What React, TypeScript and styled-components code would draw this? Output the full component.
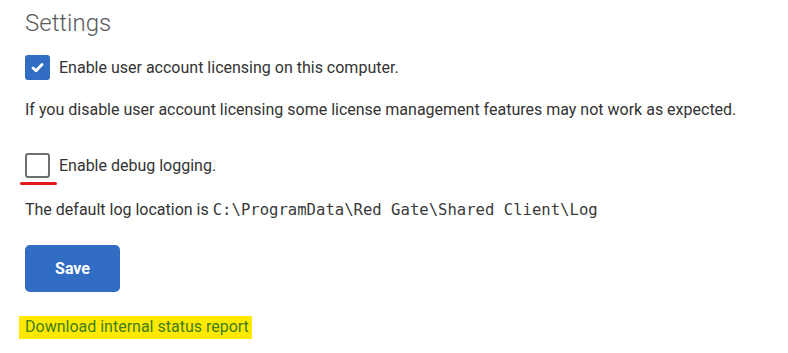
import React from "react";
import styled, {createGlobalStyle} from "styled-components";

const GlobalStyle = createGlobalStyle`
  body {
    margin: 0;
    background: #ffffff;
    font-family: Roboto, "Liberation Sans", sans-serif;
    color: #333333;
  }
`

const Page = styled.div`
  padding: 8px 25px 0 25px;
  display: flex;
  flex-direction: column;
  align-items: flex-start;
`

const Title = styled.h1`
  margin: 0;
  font-weight: 300;
  font-size: 24px;
  line-height: 30px;
  color: #5a5a5a;
`

const OptionRow = styled.label<{ $top: number }>`
  display: flex;
  align-items: center;
  gap: 9px;
  margin-top: ${p => p.$top}px;
  font-size: 16px;
  color: #333333;
  cursor: pointer;
`

const BoxWrap = styled.span`
  position: relative;
  display: inline-flex;
`

const Box = styled.span<{ $checked: boolean }>`
  box-sizing: border-box;
  width: 25px;
  height: 25px;
  border-radius: 3px;
  display: inline-flex;
  align-items: center;
  justify-content: center;
  background: ${p => p.$checked ? "#316dc2" : "#ffffff"};
  border: 2px solid ${p => p.$checked ? "#316dc2" : "#6e6e6e"};
`

const Underline = styled.span`
  position: absolute;
  left: -5px;
  top: 29px;
  width: 37px;
  height: 3px;
  border-radius: 2px;
  background: #e3191b;
`

const Text = styled.p<{ $top: number }>`
  margin: ${p => p.$top}px 0 0 0;
  font-size: 16px;
  line-height: 20px;
  color: #333333;
`

const Mono = styled.span`
  font-family: "DejaVu Sans Mono", "Liberation Mono", monospace;
  font-size: 15.6px;
  color: #3a3a3a;
`

const SaveButton = styled.button`
  margin-top: 25px;
  width: 95px;
  height: 47px;
  border: none;
  border-radius: 5px;
  background: #316dc2;
  color: #ffffff;
  font-family: Roboto, "Liberation Sans", sans-serif;
  font-weight: 700;
  font-size: 16px;
  cursor: pointer;
`

const ReportLink = styled.a`
  margin: 24px 0 0 -6px;
  padding: 1px 3px 2px 6px;
  background: #ffe900;
  color: #3c7f1c;
  font-size: 16px;
  line-height: 20px;
  text-decoration: none;
`

const Check = () => (
    <svg width="13" height="11" viewBox="0 0 13 11">
        <path d="M2 6 L5 8.8 L11 2.5" fill="none" stroke="#ffffff" strokeWidth="2.8"
              strokeLinecap="round" strokeLinejoin="round"/>
    </svg>
);

const App = () => {
    return (
        <Page>
            <GlobalStyle/>
            <Title>Settings</Title>
            <OptionRow $top={17}>
                <Box $checked={true}><Check/></Box>
                Enable user account licensing on this computer.
            </OptionRow>
            <Text $top={20}>
                If you disable user account licensing some license management features may not work as expected.
            </Text>
            <OptionRow $top={33}>
                <BoxWrap>
                    <Box $checked={false}/>
                    <Underline/>
                </BoxWrap>
                Enable debug logging.
            </OptionRow>
            <Text $top={22}>
                The default log location is <Mono>C:\ProgramData\Red Gate\Shared Client\Log</Mono>
            </Text>
            <SaveButton>Save</SaveButton>
            <ReportLink href="#">Download internal status report</ReportLink>
        </Page>
    );
};

export default App;
